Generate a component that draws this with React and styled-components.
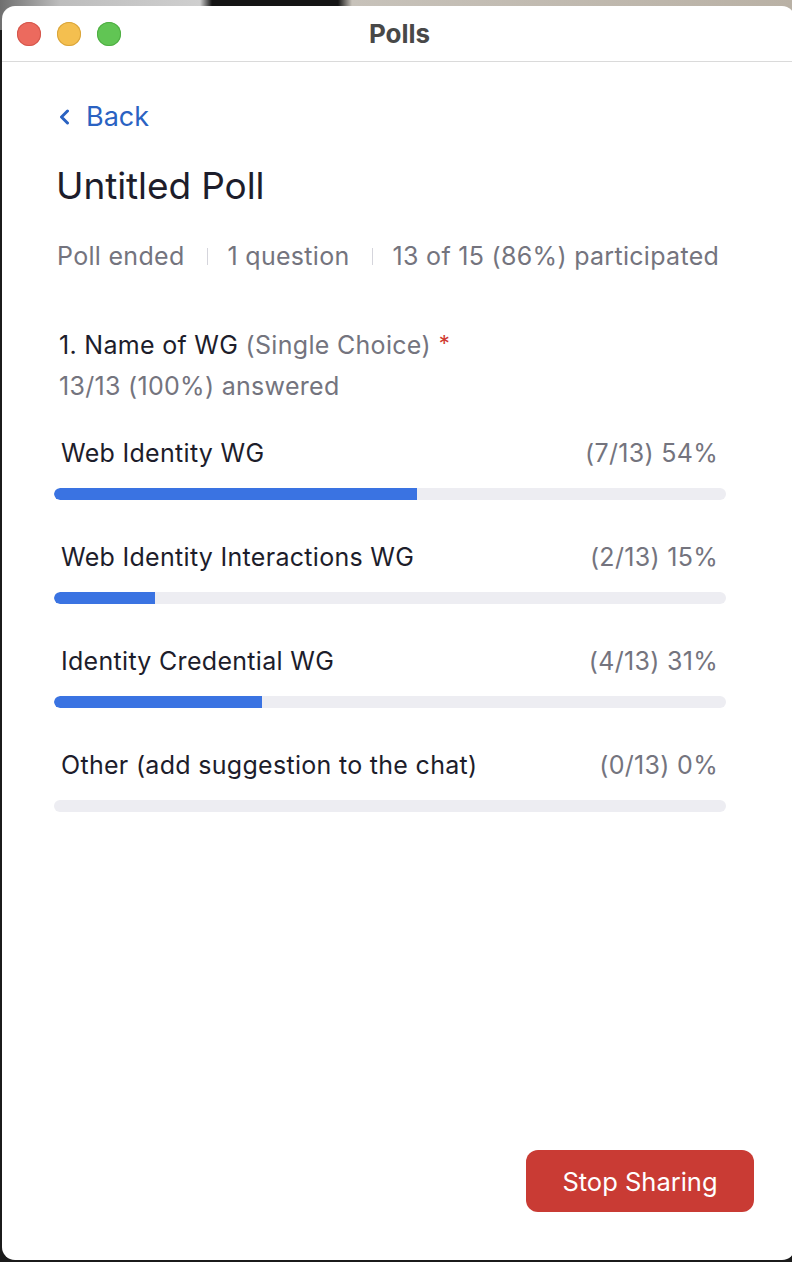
import React from "react";
import styled, { createGlobalStyle } from "styled-components";

const Global = createGlobalStyle`
  html, body { margin: 0; padding: 0; }
  body {
    width: 792px;
    height: 1262px;
    overflow: hidden;
    font-family: Inter, "Noto Sans", sans-serif;
    background:
      linear-gradient(to right, #6f6f6f 0, #bdbdbd 60px, #cfcfcf 200px, #151515 212px, #151515 338px, #c7c2ba 352px, #b9b1a5 100%) top left / 100% 30px no-repeat,
      #1b1b1b;
  }
`;

const Window = styled.div`
  margin: 6px 0 0 2px;
  width: 793px;
  height: 1254px;
  background: #ffffff;
  border-radius: 13px;
  display: flex;
  flex-direction: column;
  overflow: hidden;
`;

const TitleBar = styled.div`
  position: relative;
  height: 55px;
  flex: none;
  display: flex;
  align-items: center;
  justify-content: center;
  border-bottom: 1px solid #dadada;
`;

const Lights = styled.div`
  position: absolute;
  left: 15px;
  top: 16px;
  display: flex;
  gap: 16px;
`;

const Light = styled.span`
  width: 24px;
  height: 24px;
  border-radius: 50%;
  background: ${(p) => p.$c};
  box-shadow: inset 0 0 0 1px ${(p) => p.$b};
`;

const Title = styled.div`
  font-size: 26px;
  font-weight: 700;
  color: #484848;
  margin-left: 2px;
  letter-spacing: 0;
`;

const Content = styled.div`
  flex: 1;
  display: flex;
  flex-direction: column;
  padding: 0 69px 0 52px;
`;

const BackLink = styled.div`
  display: flex;
  align-items: center;
  gap: 16px;
  margin: 38px 0 0 4px;
  color: #2a62c2;
  font-size: 27px;
  line-height: 34px;
`;

const PollTitle = styled.h1`
  margin: 30px 0 0 2px;
  font-size: 37px;
  font-weight: 400;
  line-height: 44px;
  color: #1d1d2b;
  letter-spacing: -0.1px;
`;

const Meta = styled.div`
  display: flex;
  align-items: center;
  margin: 32px 0 0 3px;
  font-size: 25px;
  line-height: 32px;
  letter-spacing: 0.3px;
  color: #74747e;
`;

const Sep = styled.span`
  width: 1px;
  height: 17px;
  background: #d5d5dc;
  margin: 0 20px 0 22px;
`;

const Question = styled.div`
  margin: 55px 0 0 5px;
  font-size: 25px;
  line-height: 32px;
  letter-spacing: 0.3px;
  color: #1d1d2b;
`;

const Muted = styled.span`
  color: #74747e;
`;

const Star = styled.span`
  color: #d03a30;
  margin-left: 8px;
  font-size: 22px;
  vertical-align: 3px;
`;

const Answered = styled.div`
  margin: 9px 0 0 5px;
  font-size: 25px;
  line-height: 32px;
  letter-spacing: 0.3px;
  color: #74747e;
`;

const Options = styled.div`
  display: flex;
  flex-direction: column;
  gap: 41px;
  margin-top: 35px;
`;

const Option = styled.div`
  display: flex;
  flex-direction: column;
  gap: 19px;
`;

const OptionHead = styled.div`
  display: flex;
  justify-content: space-between;
  padding: 0 8px 0 7px;
  font-size: 25px;
  line-height: 32px;
  letter-spacing: 0.3px;
  color: #1d1d2b;
`;

const Count = styled.span`
  color: #74747e;
`;

const Track = styled.div`
  height: 12px;
  border-radius: 6px;
  background: #ededf2;
  overflow: hidden;
`;

const Fill = styled.div`
  height: 100%;
  background: #3a73e2;
  border-radius: 6px 0 0 6px;
`;

const Footer = styled.div`
  flex: none;
  display: flex;
  justify-content: flex-end;
  padding: 0 41px 48px 0;
`;

const StopButton = styled.button`
  width: 228px;
  height: 62px;
  border: none;
  border-radius: 12px;
  background: #c93b34;
  color: #ffffff;
  font-family: Inter, "Noto Sans", sans-serif;
  font-size: 25.5px;
  letter-spacing: 0;
`;

const options = [
  { label: "Web Identity WG", count: "(7/13) 54%", pct: 54 },
  { label: "Web Identity Interactions WG", count: "(2/13) 15%", pct: 15 },
  { label: "Identity Credential WG", count: "(4/13) 31%", pct: 31 },
  { label: "Other (add suggestion to the chat)", count: "(0/13) 0%", pct: 0 },
];

export default function App() {
  return (
    <>
      <Global />
      <Window>
        <TitleBar>
          <Lights>
            <Light $c="#ec6a5e" $b="#d4574c" />
            <Light $c="#f4bf4f" $b="#d9a53b" />
            <Light $c="#61c554" $b="#4fae43" />
          </Lights>
          <Title>Polls</Title>
        </TitleBar>
        <Content>
          <BackLink>
            <svg width="12" height="16" viewBox="0 0 12 16" fill="none">
              <path d="M9.5 2 L3.5 8 L9.5 14" stroke="#2a62c2" strokeWidth="3" strokeLinecap="round" strokeLinejoin="round" />
            </svg>
            <span>Back</span>
          </BackLink>
          <PollTitle>Untitled Poll</PollTitle>
          <Meta>
            <span>Poll ended</span>
            <Sep />
            <span>1 question</span>
            <Sep />
            <span>13 of 15 (86%) participated</span>
          </Meta>
          <Question>
            1. Name of WG <Muted>(Single Choice)</Muted>
            <Star>*</Star>
          </Question>
          <Answered>13/13 (100%) answered</Answered>
          <Options>
            {options.map((o) => (
              <Option key={o.label}>
                <OptionHead>
                  <span>{o.label}</span>
                  <Count>{o.count}</Count>
                </OptionHead>
                <Track>
                  <Fill style={{ width: `${o.pct}%` }} />
                </Track>
              </Option>
            ))}
          </Options>
        </Content>
        <Footer>
          <StopButton>Stop Sharing</StopButton>
        </Footer>
      </Window>
    </>
  );
}
